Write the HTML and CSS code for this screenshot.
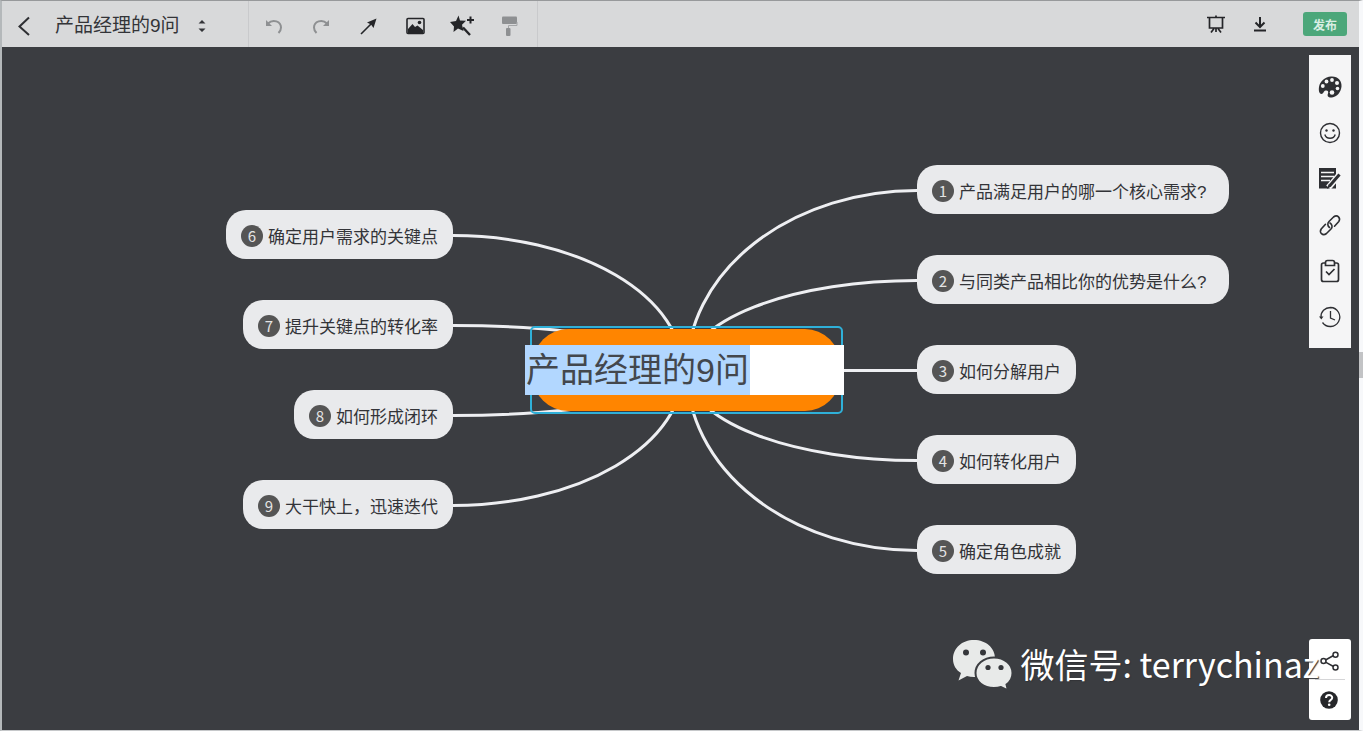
FILE: index.html
```html
<!DOCTYPE html>
<html lang="zh-CN">
<head>
<meta charset="utf-8">
<title>产品经理的9问</title>
<link rel="stylesheet" href="styles.css">
</head>
<body>
<div class="app">
  <header class="toolbar">
    <div class="file">
      <button class="icon-btn back" aria-label="返回"><svg width="14" height="20" viewBox="0 0 14 20"><path d="M12 1.500 2.500 10.500 12 19" fill="none" stroke="#2e2f33" stroke-width="2"/></svg></button>
      <h1 class="file-name">产品经理的9问</h1>
      <button class="icon-btn switch" aria-label="切换文件"><svg width="8" height="14" viewBox="0 0 8 14"><path d="M0.500 4.500 4 1 7.500 4.500zM0.500 9.500 4 13 7.500 9.500z" fill="#333438"/></svg></button>
    </div>
    <div class="tools">
      <button class="icon-btn" aria-label="撤销"><svg width="20" height="20" viewBox="0 0 20 20"><path d="M4 7.500C9 2.500 17 5.500 17 11.500Q17 14.500 14.500 17" fill="none" stroke="#8e9092" stroke-width="2"/><path d="M2 4v6h6z" fill="#8e9092"/></svg></button>
      <button class="icon-btn" aria-label="重做"><svg width="20" height="20" viewBox="0 0 20 20"><path d="M16 7.500C11 2.500 3 5.500 3 11.500Q3 14.500 5.500 17" fill="none" stroke="#8e9092" stroke-width="2"/><path d="M18 4v6h-6z" fill="#8e9092"/></svg></button>
      <button class="icon-btn" aria-label="关系线"><svg width="20" height="20" viewBox="0 0 20 20"><path d="M3 18 14 7" stroke="#242528" stroke-width="1.600"/><path d="M18.500 2.500 15.500 12 13 8.500 9 6.500z" fill="#242528"/></svg></button>
      <button class="icon-btn" aria-label="图片"><svg width="20" height="20" viewBox="0 0 20 20"><rect x="2" y="2.500" width="17" height="15" rx="1" fill="none" stroke="#242528" stroke-width="1.600"/><path d="M3 17v-4l4.500-5 2.500 3 2.500-1.500L18 14v3z" fill="#242528"/><circle cx="14.500" cy="6.500" r="1.800" fill="#242528"/></svg></button>
      <button class="icon-btn" aria-label="美化"><svg width="26" height="24" viewBox="0 0 26 24"><path d="M9.500 1.500 11 6.500 17 6.700 13 10.800 14.500 17 9 14.500 4.500 18 5 12.500 1 8 7 7z" fill="#242528"/><path d="m14 13.500 7 7.500" stroke="#242528" stroke-width="2.400"/><path d="M21.500 2.500v7M18 6h7" stroke="#242528" stroke-width="2"/></svg></button>
      <button class="icon-btn" aria-label="格式刷"><svg width="20" height="22" viewBox="0 0 20 22"><rect x="3" y="1.500" width="15" height="7.500" rx="1" fill="#8e9092"/><path d="M18 7v3.500H9.500V13" fill="none" stroke="#a4a6a8"/><rect x="7" y="13" width="4.500" height="8" rx="1" fill="#8e9092"/></svg></button>
    </div>
    <div class="actions">
      <button class="icon-btn" aria-label="演示"><svg width="20" height="20" viewBox="0 0 20 20"><path d="M1 3.500h18M10 1.500v2M3.500 3.500v10.500h13V3.500M10 14v4M8 14.500 5 18.500M12 14.500l3 4" fill="none" stroke="#242528" stroke-width="1.700"/></svg></button>
      <button class="icon-btn" aria-label="下载"><svg width="14" height="18" viewBox="0 0 14 18"><path d="M7 2v9.500M2.500 7.500 7 12l4.500-4.500M1 15.500h12" fill="none" stroke="#242528" stroke-width="2"/></svg></button>
      <button class="publish">发布</button>
    </div>
  </header>

  <main class="canvas">
    <div class="map">
      <svg class="links" width="1003" height="409" viewBox="0 0 1003 409">
        <path d="M461 205.500A230 180 0 0 1 691 25.500M461 205.500A230 90 0 0 1 691 115.500M461 205.500H691M461 205.500A230 90 0 0 0 691 295.500M461 205.500A230 180 0 0 0 691 385.500"/>
        <path d="M457 205.500A230 135 0 0 0 227 70.500M461 205.500A234 45 0 0 0 227 160.500M461 205.500A234 45 0 0 1 227 250.500M457 205.500A230 135 0 0 1 227 340.500"/>
      </svg>
      <div class="node right r1"><span class="badge">1</span><span class="label">产品满足用户的哪一个核心需求?</span></div>
      <div class="node right r2"><span class="badge">2</span><span class="label">与同类产品相比你的优势是什么?</span></div>
      <div class="node right r3"><span class="badge">3</span><span class="label">如何分解用户</span></div>
      <div class="node right r4"><span class="badge">4</span><span class="label">如何转化用户</span></div>
      <div class="node right r5"><span class="badge">5</span><span class="label">确定角色成就</span></div>
      <div class="node left l1"><span class="badge">6</span><span class="label">确定用户需求的关键点</span></div>
      <div class="node left l2"><span class="badge">7</span><span class="label">提升关键点的转化率</span></div>
      <div class="node left l3"><span class="badge">8</span><span class="label">如何形成闭环</span></div>
      <div class="node left l4"><span class="badge">9</span><span class="label">大干快上，迅速迭代</span></div>
      <div class="root"></div>
      <div class="selection"></div>
      <input class="root-edit" type="text" aria-label="中心主题" value="产品经理的9问">
    </div>

    <aside class="panel side">
      <button class="icon-btn" aria-label="风格"><svg width="24" height="24" viewBox="0 0 24 24"><path d="M13 1.500C20 1 24 6 23.500 11.500 23 17 19 22 14 22.500c-4 .3-5-1.500-4-4 .8-2.500-.5-3.500-2.500-3C5.500 16 5.500 19 3.500 19 1 19 .500 15 1 12 2 6 7 2 13 1.500z" fill="#2e2f33"/><g fill="#f5f5f6"><circle cx="4.800" cy="11" r="1.900"/><circle cx="8.500" cy="6.500" r="1.900"/><circle cx="14" cy="5" r="1.900"/><circle cx="19" cy="8" r="2"/><circle cx="19.500" cy="13.500" r="1.800"/><circle cx="14" cy="17.500" r="2.300"/></g></svg></button>
      <button class="icon-btn" aria-label="图标"><svg width="24" height="24" viewBox="0 0 24 24"><circle cx="12" cy="12" r="9.500" fill="none" stroke="#2e2f33" stroke-width="1.400"/><circle cx="8.500" cy="9.500" r="1.200" fill="#2e2f33"/><circle cx="15.500" cy="9.500" r="1.200" fill="#2e2f33"/><path d="M6.800 13.500c1.500 5 9 5 10.400 0" fill="none" stroke="#2e2f33" stroke-width="1.400"/></svg></button>
      <button class="icon-btn" aria-label="备注"><svg width="24" height="24" viewBox="0 0 24 24"><path d="M1 1h17v20.500H1z" fill="#2e2f33"/><path d="M3 5.500h13M3 9.500h13M3 13.500h9" stroke="#f5f5f6" stroke-width="1.500"/><path d="M22 7 10.500 20.500" stroke="#f5f5f6" stroke-width="6"/><path d="M21.500 7.500 11.500 19" stroke="#2e2f33" stroke-width="3"/><path d="m10.500 17.500 2.500 2-4 2.500z" fill="#2e2f33"/></svg></button>
      <button class="icon-btn" aria-label="链接"><svg width="24" height="24" viewBox="0 0 24 24"><g fill="none" stroke="#2e2f33" stroke-width="1.600" stroke-linecap="round"><path d="M11.500 14.500c-2-1.500-2.300-4.200-.5-6l4.500-4.500c4-3 7.500 1 5.300 4.500l-4.300 4.700"/><path d="M12 10c2.200 1.300 2.800 4.200 1 6l-4.500 4.500c-4 3-7.500-1-5.300-4.500l4.300-4.700"/></g></svg></button>
      <button class="icon-btn" aria-label="任务"><svg width="24" height="24" viewBox="0 0 24 24"><g fill="none" stroke="#2e2f33" stroke-width="1.700"><rect x="3.500" y="4" width="17" height="18.500" rx="2"/><path d="m8 12.500 3 3 5.500-5.500"/><path d="M7.500 6.500v-3q0-2 2-2h5q2 0 2 2v3z" fill="#f5f5f6"/></g></svg></button>
      <button class="icon-btn" aria-label="历史"><svg width="24" height="24" viewBox="0 0 24 24"><path d="M3 12.500C2.500 6.500 7 2.500 12.500 2.500a9.500 9.500 0 1 1-8 15" fill="none" stroke="#2e2f33" stroke-width="1.300"/><path d="M1 11.500h4.500l-2.200 3z" fill="#2e2f33"/><path d="M12.500 6v7l4.500 2" fill="none" stroke="#2e2f33" stroke-width="1.300"/></svg></button>
    </aside>

    <aside class="panel help">
      <button class="icon-btn" aria-label="分享"><svg width="20" height="20" viewBox="0 0 20 20"><g fill="none" stroke="#2e2f33" stroke-width="1.500"><path d="M5.500 9 13.500 4.500M5.500 11.200 13.500 15.500"/><circle cx="3.500" cy="10" r="2.500"/><circle cx="15.500" cy="3.700" r="2.500"/><circle cx="15.500" cy="16.500" r="2.500"/></g></svg></button>
      <button class="icon-btn" aria-label="帮助"><svg width="20" height="20" viewBox="0 0 20 20"><circle cx="10" cy="10" r="8.800" fill="#26272a"/><path d="M7 8c0-4 6.300-3.700 6.200-.3C13.200 10 10.200 9.800 10.200 12.300" fill="none" stroke="#fff" stroke-width="2"/><circle cx="10.200" cy="14.800" r="1.300" fill="#fff"/></svg></button>
    </aside>

    <div class="watermark">
      <svg width="62" height="54" viewBox="0 0 62 54"><path d="M22 1C34 1 43 9 43 19S34 38 22 38q-4 0-7-1L6.500 41.500 9 34C4 31 1 26 1 20 1 9 10 1 22 1z" fill="#e8eae9"/><path d="M42 18.500c10.500 0 18.500 7 18.500 15.500 0 5-2.500 9-6 11.500l1.500 6-7-3.500q-3 1-7 1c-10.500 0-18.500-6.500-18.500-15S31.500 18.500 42 18.500z" fill="#e8eae9" stroke="#3b3d41" stroke-width="2"/><g fill="#35373b"><circle cx="14" cy="13.500" r="3"/><circle cx="31" cy="13.500" r="3"/><circle cx="36" cy="28.500" r="2.600"/><circle cx="49" cy="28.500" r="2.600"/></g></svg>
      <span class="watermark-text">微信号: terrychinaz</span>
    </div>
  </main>
  <div class="scroll-thumb"></div>
</div>
</body>
</html>
```
FILE: styles.css
```css
* {
  box-sizing: border-box;
}

body {
  margin: 0;
  font-family: "Liberation Sans", "Noto Sans CJK SC", sans-serif;
  color: #333438;
}

.app {
  position: relative;
  display: flex;
  flex-direction: column;
  height: 100vh;
  border-style: solid;
  border-width: 1px 4px 1px 2px;
  border-color: #97999b #f7f8fa #c6c8ca #b4b8ba;
}

.icon-btn {
  display: flex;
  align-items: center;
  justify-content: center;
  padding: 0;
  border: 0;
  background: none;
}

.icon-btn svg {
  flex: none;
}

.toolbar {
  display: flex;
  flex: none;
  height: 46px;
  background: #d8d9da;
}

.file,
.tools {
  display: flex;
  align-items: center;
  border-right: 1px solid #c9cacc;
}

.file {
  width: 247px;
  padding: 4px 0 0 15px;
}

.file-name {
  margin: 0 18px 0 24px;
  font-size: 19px;
  line-height: 24px;
  font-weight: 400;
}

.tools {
  width: 289px;
  padding: 4px 0 0 1px;
}

.tools .icon-btn {
  flex: none;
  width: 47px;
}

.actions {
  display: flex;
  align-items: center;
  margin-left: auto;
  padding-right: 12px;
}

.actions .icon-btn {
  width: 20px;
  margin-right: 24px;
}

.publish {
  width: 44px;
  height: 24px;
  margin-left: 9px;
  padding: 0;
  border: 0;
  border-radius: 3px;
  background: #4ca77a;
  color: #d9eee3;
  font: 700 12px "Noto Sans CJK SC", sans-serif;
}

.canvas {
  position: relative;
  flex: 1;
  overflow: hidden;
  background: #3b3d41;
}

.map {
  position: absolute;
  left: 224px;
  top: 118px;
  width: 1003px;
  height: 409px;
}

.links {
  display: block;
  fill: none;
  stroke: #eeeff2;
  stroke-width: 3px;
}

.node {
  position: absolute;
  display: flex;
  align-items: center;
  gap: 5px;
  height: 49px;
  padding: 0 15px;
  border-radius: 20px;
  background: #e9eaec;
  font-size: 17px;
  line-height: 24px;
  white-space: nowrap;
}

.label {
  padding-top: 7px;
}

.badge {
  width: 22px;
  height: 22px;
  margin-top: 2px;
  border-radius: 50%;
  background: #555;
  color: #e4e4e4;
  font: 15px/21px "Noto Sans CJK SC", sans-serif;
  text-align: center;
}

.right { left: 691px; }
.left { right: 776px; }
.r1, .r2 { padding-right: 23px; }
.r1 { top: 0; }
.r2 { top: 90px; }
.r3 { top: 180px; }
.r4 { top: 270px; }
.r5 { top: 360px; }
.l1 { top: 45px; }
.l2 { top: 135px; }
.l3 { top: 225px; }
.l4 { top: 315px; }

.root {
  position: absolute;
  left: 307px;
  top: 164px;
  width: 307px;
  height: 82px;
  border-radius: 35px;
  background: #ff8500;
}

.selection {
  position: absolute;
  left: 304px;
  top: 161px;
  width: 313px;
  height: 88px;
  border: 2px solid #2fb0d8;
  border-radius: 5px;
}

.root-edit {
  position: absolute;
  left: 299px;
  top: 180px;
  width: 319px;
  height: 50px;
  padding: 0 1px 5px;
  border: 0;
  background: linear-gradient(#b2d7ff, #b2d7ff) 0 0 / 225px 100% no-repeat #fff;
  color: #43474d;
  font: 34px "Liberation Sans", "Noto Sans CJK SC", sans-serif;
}

.panel {
  position: absolute;
  right: 8px;
  display: flex;
  flex-direction: column;
  width: 42px;
  background: #f5f5f6;
}

.side {
  top: 8px;
  gap: 21px;
  padding: 19px 0;
}

.side .icon-btn {
  height: 25px;
}

.help {
  bottom: 10px;
  border-radius: 3px;
  background: #fff;
}

.help .icon-btn {
  height: 40px;
  padding-right: 3px;
}

.help .icon-btn:first-child {
  height: 41px;
  margin: 0 6px;
  padding: 4px 0 0;
  border-bottom: 1px solid #d5d5d7;
}

.watermark {
  position: absolute;
  right: 40px;
  bottom: 36px;
  display: flex;
  align-items: center;
  gap: 6px;
  color: #fff;
  font: 34px/52px "Noto Sans CJK SC", sans-serif;
  text-shadow: 1px 1px 1px #333438;
  white-space: nowrap;
  pointer-events: none;
}

.watermark-text {
  padding-bottom: 4px;
}

.scroll-thumb {
  position: absolute;
  right: -4px;
  top: 351px;
  width: 4px;
  height: 26px;
  background: #c2c3c5;
}
```
